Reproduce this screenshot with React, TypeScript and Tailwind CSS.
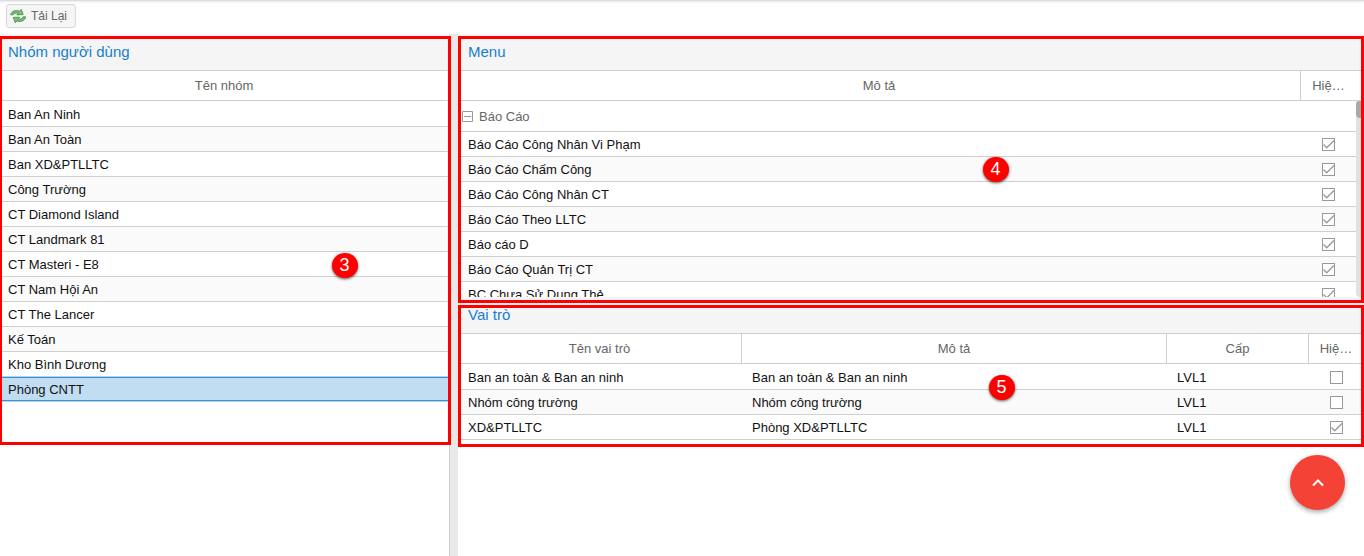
import React from "react";

const groups = [
  "Ban An Ninh", "Ban An Toàn", "Ban XD&PTLLTC", "Công Trường", "CT Diamond Island", "CT Landmark 81",
  "CT Masteri - E8", "CT Nam Hội An", "CT The Lancer", "Kế Toán", "Kho Bình Dương",
];
const menus = [
  "Báo Cáo Công Nhân Vi Phạm", "Báo Cáo Chấm Công", "Báo Cáo Công Nhân CT", "Báo Cáo Theo LLTC",
  "Báo cáo D", "Báo Cáo Quản Trị CT", "BC Chưa Sử Dụng Thẻ",
];
const roles = [
  { name: "Ban an toàn & Ban an ninh", desc: "Ban an toàn & Ban an ninh", level: "LVL1", on: false },
  { name: "Nhóm công trường", desc: "Nhóm công trường", level: "LVL1", on: false },
  { name: "XD&PTLLTC", desc: "Phòng XD&PTLLTC", level: "LVL1", on: true },
];

function Check({ on }: { on: boolean }) {
  return (
    <svg className="block h-[13px] w-[13px] shrink-0" viewBox="0 0 13 13" fill="none">
      <rect x="0.5" y="0.5" width="12" height="12" fill="#fff" stroke="#999" />
      {on && <path d="M1.5 6.5 4.7 9.8 12 2.5" stroke="#999" strokeWidth="1.3" />}
    </svg>
  );
}

function Marker({ n, place }: { n: number; place: string }) {
  return (
    <div className={`absolute z-20 flex h-[25px] w-[26px] items-center justify-center rounded-full bg-[#f00] pb-[2px] text-[18px] leading-none text-white shadow-[0_1px_3px_rgba(0,0,0,0.65)] ${place}`}>
      {n}
    </div>
  );
}

function Title({ children, box }: { children: React.ReactNode; box: string }) {
  return <div className={`shrink-0 border-b border-[#cfcfcf] bg-[#f5f5f5] text-[15px] text-[#157fcc] ${box}`}>{children}</div>;
}

function Head({ children }: { children: React.ReactNode }) {
  return <div className="flex h-[30px] shrink-0 border-b border-[#cfcfcf] text-center text-[13px] leading-[29px] text-[#666]">{children}</div>;
}

export default function App() {
  return (
    <div className="relative flex h-[556px] w-[1364px] flex-col overflow-hidden bg-white font-['Liberation_Sans',Arial,sans-serif] text-[13px] text-[#111]">
      <div className="h-[34px] shrink-0 bg-[linear-gradient(#d2d2d2,#e9e9e9_1px,#f6f6f6_2px,#fff_4px)] pl-[6px] pt-[4px]">
        <button className="flex h-[24px] w-[70px] items-center whitespace-nowrap rounded-[3px] border border-[#d8d8d8] bg-[#f5f5f5] pl-[3px] text-[12px] text-[#666]">
          <svg className="mr-[5px] h-4 w-4 shrink-0" viewBox="0 0 16 16" strokeLinejoin="round">
            <path d="M.7 6.8C1.2 3.2 5.5 1.6 9.6 3.2L11.3 1.4 13.2 6.6 6.8 6.9 8.2 5.2C6 4.5 4 5.2 3.2 6.8Z" fill="#78bf78" stroke="#388c3d" strokeWidth=".8" />
            <path d="M15.6 8.8C15.2 12.6 11 14.4 6.9 12.9L5.3 14.8 3.3 9.4 9.6 9.2 8.2 10.9C10.3 11.6 12.4 10.8 13.2 8.8Z" fill="#78bf78" stroke="#388c3d" strokeWidth=".8" />
          </svg>
          Tải Lại
        </button>
      </div>
      <div className="flex min-h-0 flex-1">
        <div className="w-[450px] shrink-0 border-r border-[#cfcfcf]">
          <div className="h-[2px] bg-[#f5f5f5]" />
          <section className="relative z-10 flex h-[409px] w-[451px] flex-col border-y-[3px] border-l-2 border-r-[3px] border-[#f00] bg-white">
            <Title box="h-[32px] pl-[6px] pt-[3px] leading-[20px]">Nhóm người dùng</Title>
            <Head><span className="w-[444px]">Tên nhóm</span></Head>
            <div className="pt-px">
              {groups.map((g, i) => (
                <div key={g} className={`h-[25px] border-b border-[#cfcfcf] pl-[6px] leading-[25px] ${i % 2 ? "bg-[#fafafa]" : "bg-white"}`}>{g}</div>
              ))}
              <div className="-mt-px h-[26px] border-y border-[#b5d3ec]">
                <div className="h-[24px] border-y border-[#3892d4] bg-[#c1ddf1] pl-[6px] leading-[23px]">Phòng CNTT</div>
              </div>
            </div>
          </section>
        </div>
        <div className="w-[8px] shrink-0 bg-[#e9e9e9]" />
        <div className="min-w-0 flex-1">
          <div className="h-[2px] bg-[#f5f5f5]" />
          <section className="flex h-[267px] flex-col border-[3px] border-[#f00] bg-white">
            <Title box="h-[32px] pl-[7px] pt-[3px] leading-[20px]">Menu</Title>
            <Head>
              <span className="w-[839px] pr-[3px]">Mô tả</span>
              <span className="w-[61px] border-l border-[#cfcfcf] pr-[5px]">Hiệ…</span>
            </Head>
            <div className="flex h-[196px] overflow-hidden">
              <div className="w-[895px]">
                <div className="flex h-[31px] items-center border-b border-[#cfcfcf] pl-px pt-px text-[#666]">
                  <svg className="mr-[6px] h-[11px] w-[11px]" viewBox="0 0 11 11" fill="none" stroke="#999"><path d="M.5.5h10v10H.5ZM2 5.5h7" /></svg>
                  Báo Cáo
                </div>
                {menus.map((m, i) => (
                  <div key={m} className={`flex h-[25px] items-center justify-between border-b border-[#cfcfcf] pl-[7px] pr-[21px] leading-[25px] ${i % 2 ? "bg-[#fafafa]" : "bg-white"}`}>
                    {m}<Check on />
                  </div>
                ))}
              </div>
              <div className="w-[5px] rounded-bl-[4px] bg-[#e1e1e1]"><div className="h-[17px] rounded-l-[4px] bg-[#a9a9a9]" /></div>
            </div>
            <div className="h-[3px] bg-[#f5f5f5]" />
          </section>
          <div className="h-[2px] bg-[#f5f5f5]" />
          <section className="flex h-[142px] flex-col border-[3px] border-[#f00] bg-white">
            <Title box="h-[26px] pl-[7px] leading-[14px]">Vai trò</Title>
            <Head>
              <span className="w-[280px] pr-[3px]">Tên vai trò</span>
              <span className="w-[425px] border-l border-[#cfcfcf]">Mô tả</span>
              <span className="w-[142px] border-l border-[#cfcfcf]">Cấp</span>
              <span className="w-[53px] border-l border-[#cfcfcf] pl-[2px]">Hiệ…</span>
            </Head>
            <div className="pt-px">
              {roles.map((r, i) => (
                <div key={r.name} className={`flex h-[25px] items-center border-b border-[#cfcfcf] pl-[7px] leading-[25px] ${i % 2 ? "bg-[#fafafa]" : "bg-white"}`}>
                  <span className="w-[284px]">{r.name}</span>
                  <span className="w-[425px]">{r.desc}</span>
                  <span className="w-[153px]">{r.level}</span>
                  <Check on={r.on} />
                </div>
              ))}
            </div>
          </section>
        </div>
      </div>
      <Marker n={3} place="left-[331.5px] top-[253px]" />
      <Marker n={4} place="left-[982.5px] top-[157px]" />
      <Marker n={5} place="left-[988.5px] top-[375px]" />
      <button aria-label="Lên đầu trang" className="absolute left-[1290px] top-[455px] flex h-[55px] w-[55px] items-center justify-center rounded-full bg-[#f44336] shadow-[0_2px_5px_rgba(0,0,0,0.35)]">
        <svg className="h-3 w-3" viewBox="0 0 12 12" fill="none" stroke="#fff" strokeWidth="2"><path d="M1 8.5 6 3.5 11 8.5" /></svg>
      </button>
    </div>
  );
}
